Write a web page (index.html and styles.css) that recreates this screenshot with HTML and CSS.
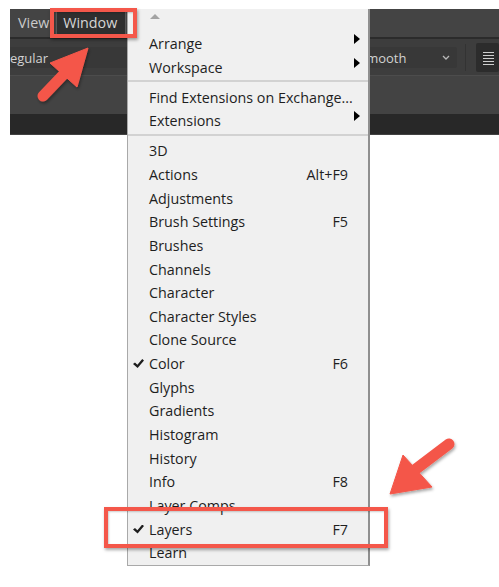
FILE: index.html
```html
<!DOCTYPE html>
<html lang="en">

<head>
  <meta charset="UTF-8" />
  <meta name="viewport" content="width=device-width, initial-scale=1" />
  <title>Window menu</title>
  <link rel="stylesheet" href="styles.css">
</head>

<body>

  <!-- Application chrome behind the open menu -->
  <div class="app">
    <div class="menubar">
      <span class="menubar-item">View</span>
      <span class="menubar-item is-open">Window</span>
    </div>
    <div class="menubar-edge"></div>
    <div class="options">
      <div class="field field-font"><span>egular</span></div>
      <div class="field field-aa">
        <span>Smooth</span>
        <svg class="chevron" width="8" height="5" viewBox="0 0 8 5"><path d="M1 1 L4 4 L7 1" fill="none" stroke="#b8b8b8" stroke-width="1.3" /></svg>
      </div>
      <div class="opt-sep"></div>
      <div class="opt-btn">
        <svg width="14" height="18" viewBox="0 0 14 18">
          <g stroke="#cfcfcf" stroke-width="1">
            <path d="M3 3.5 H14 M3 6.5 H14 M3 9.5 H14 M3 12.5 H14 M3 15.5 H14" />
          </g>
        </svg>
      </div>
    </div>
    <div class="panel-strip"></div>
    <div class="doc-tabs"></div>
  </div>

  <!-- Window dropdown -->
  <div class="menu">
    <div class="menu-scroll"></div>
    <div class="menu-item sub">Arrange</div>
    <div class="menu-item sub">Workspace</div>
    <div class="menu-sep"></div>
    <div class="menu-item">Find Extensions on Exchange...</div>
    <div class="menu-item sub">Extensions</div>
    <div class="menu-sep"></div>
    <div class="menu-item">3D</div>
    <div class="menu-item">Actions<span class="key">Alt+F9</span></div>
    <div class="menu-item">Adjustments</div>
    <div class="menu-item">Brush Settings<span class="key">F5</span></div>
    <div class="menu-item">Brushes</div>
    <div class="menu-item">Channels</div>
    <div class="menu-item">Character</div>
    <div class="menu-item">Character Styles</div>
    <div class="menu-item">Clone Source</div>
    <div class="menu-item checked">Color<span class="key">F6</span></div>
    <div class="menu-item">Glyphs</div>
    <div class="menu-item">Gradients</div>
    <div class="menu-item">Histogram</div>
    <div class="menu-item">History</div>
    <div class="menu-item">Info<span class="key">F8</span></div>
    <div class="menu-item">Layer Comps</div>
    <div class="menu-item checked">Layers<span class="key">F7</span></div>
    <div class="menu-item">Learn</div>
  </div>

  <!-- Callouts -->
  <div class="callout callout-window"></div>
  <div class="callout callout-layers"></div>

  <svg class="arrows" width="499" height="587" viewBox="0 0 499 587">
    <defs>
      <filter id="shade" x="-20%" y="-20%" width="140%" height="140%">
        <feDropShadow dx="1" dy="2" stdDeviation="1.5" flood-color="#000" flood-opacity="0.35" />
      </filter>
    </defs>
    <g fill="#f4574a" stroke="#f4574a" filter="url(#shade)">
      <line x1="65" y1="73" x2="43" y2="96" stroke-width="11" stroke-linecap="round" />
      <polygon points="88,48 50,63 77,87" stroke-width="1" stroke-linejoin="round" />
      <line x1="416" y1="469" x2="449" y2="444" stroke-width="11" stroke-linecap="round" />
      <polygon points="390,494 403,455 432,487" stroke-width="1" stroke-linejoin="round" />
    </g>
  </svg>

</body>

</html>
```

FILE: styles.css
```css
* {
  margin: 0;
  padding: 0;
  box-sizing: border-box;
}

body {
  background: #fff;
  font-family: 'Open Sans', 'Noto Sans', sans-serif;
  width: 499px;
  height: 587px;
  overflow: hidden;
  position: relative;
}

/* app chrome */
.app {
  margin: 9px 0 0 10px;
  height: 126px;
  overflow: hidden;
  background: #424242;
}

.menubar {
  height: 28px;
  display: flex;
  align-items: center;
  background: #444;
  color: #cbcbcb;
  font-size: 14.3px;
}

.menubar-item {
  padding: 0 7px 0 8px;
  line-height: 24px;
}

.menubar-item.is-open {
  background: #2f2f2f;
  border: 1px solid #585858;
  padding: 0 8px 0 6px;
  color: #d6d6d6;
}

.menubar-edge {
  height: 2px;
  background: #2b2b2b;
}

.options {
  height: 37px;
  display: flex;
  align-items: flex-start;
  background: #3d3d3d;
  border-bottom: 1px solid #4c4c4c;
}

.field {
  margin-top: 8px;
  height: 21px;
  background: #383838;
  color: #d2d2d2;
  font-size: 13px;
  line-height: 20px;
  display: flex;
  align-items: center;
}

.field-font {
  width: 120px;
  padding-left: 0;
}

.field-aa {
  width: 104px;
  margin-left: 228px;
  padding-left: 4px;
  border-radius: 2px;
}

.chevron {
  margin-left: auto;
  margin-right: 7px;
}

.opt-sep {
  width: 1px;
  height: 27px;
  margin: 5px 0 0 8px;
  background: #333;
}

.opt-btn {
  width: 24px;
  height: 29px;
  margin: 4px 0 0 10px;
  background: #2c2c2c;
  border-radius: 2px;
  display: flex;
  align-items: center;
  padding-left: 4px;
}

.panel-strip {
  height: 38px;
  background: #434343;
}

.doc-tabs {
  height: 20px;
  background: #282828;
}

/* dropdown */
.menu {
  position: absolute;
  left: 127px;
  top: 9px;
  width: 243px;
  background: #f0f0f0;
  border: 1px solid #a9a9a9;
  border-top: none;
  border-right: 2px solid #8f8f8f;
  color: #1e1e1e;
  font-size: 14.3px;
  padding-bottom: 1px;
}

.menu-scroll {
  height: 22px;
  position: relative;
}

.menu-scroll::before {
  content: '';
  position: absolute;
  left: 22px;
  top: 5px;
  border-left: 5px solid transparent;
  border-right: 5px solid transparent;
  border-bottom: 5px solid #a3a3a3;
}

.menu-item {
  height: 23.65px;
  line-height: 25px;
  padding: 0 20px 0 21px;
  display: flex;
  position: relative;
  white-space: nowrap;
}

.menu-item .key {
  margin-left: auto;
}

.menu-item.sub::after {
  content: '';
  position: absolute;
  right: 8px;
  top: 3px;
  border-top: 5px solid transparent;
  border-bottom: 5px solid transparent;
  border-left: 6px solid #000;
}

.menu-item.checked::before {
  content: '';
  position: absolute;
  left: 5px;
  top: 8px;
  width: 11px;
  height: 9px;
  background: #1e1e1e;
  clip-path: polygon(0 55%, 18% 38%, 40% 62%, 84% 0, 100% 15%, 42% 100%);
}

.menu-sep {
  height: 6.4px;
  padding-top: 2px;
}

.menu-sep::before {
  content: '';
  display: block;
  height: 2px;
  background: #d2d2d2;
}

/* annotations */
.callout {
  position: absolute;
  border: 4px solid #f4574a;
  box-shadow: 1px 2px 3px rgba(0, 0, 0, 0.35), inset 1px 1px 2px rgba(0, 0, 0, 0.2);
}

.callout-window {
  left: 50px;
  top: 8px;
  width: 87px;
  height: 30px;
}

.callout-layers {
  left: 104px;
  top: 507px;
  width: 284px;
  height: 41px;
}

.arrows {
  position: absolute;
  left: 0;
  top: 0;
  pointer-events: none;
}
```
